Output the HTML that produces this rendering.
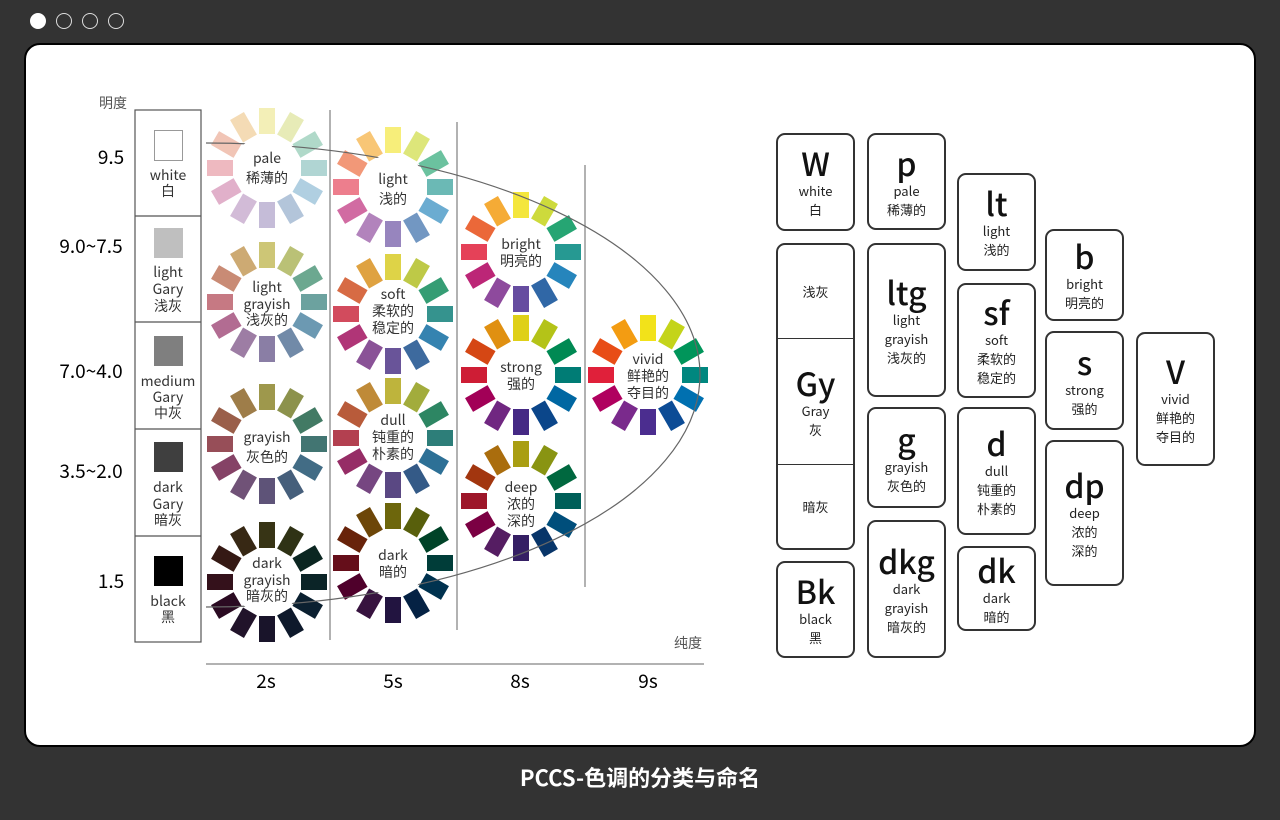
<!DOCTYPE html>
<html><head><meta charset="utf-8">
<style>
html,body{margin:0;padding:0}
body{width:1280px;height:820px;background:#333;position:relative;overflow:hidden;font-family:"Noto Sans CJK SC","Liberation Sans",sans-serif;color:#222}
.dot{position:absolute;top:13px;width:14px;height:14px;border:1.5px solid #ddd;border-radius:50%}
.card{position:absolute;left:24px;top:43px;width:1228px;height:700px;background:#fff;border:2px solid #000;border-radius:16px}
.box{position:absolute;border:2px solid #333;border-radius:9px;box-sizing:border-box;display:flex;flex-direction:column;align-items:center;justify-content:center;text-align:center;font-size:13px;line-height:19px;color:#222}
.box b{font-weight:500;font-size:32px;line-height:36px;color:#111}
.foot{position:absolute;left:0;width:1280px;top:761px;text-align:center;color:#fff;font-size:22px;font-weight:700}
</style></head><body>
<div class="dot" style="left:30px;background:#fff;border-color:#fff"></div>
<div class="dot" style="left:56px"></div>
<div class="dot" style="left:82px"></div>
<div class="dot" style="left:108px"></div>
<div class="card"></div>
<svg id="sv" width="1280" height="820" style="position:absolute;left:0;top:0" font-family="Noto Sans CJK SC, Liberation Sans, sans-serif">
<g fill="none" stroke="#999" stroke-width="1.5">
<line x1="330" y1="110" x2="330" y2="640"/>
<line x1="457" y1="122" x2="457" y2="630"/>
<line x1="585" y1="165" x2="585" y2="587"/>
<line x1="206" y1="664" x2="704" y2="664"/>
</g>
<g stroke="#555" stroke-width="1.2" fill="#fff">
<rect x="135" y="110" width="66" height="532"/>
<line x1="135" y1="216" x2="201" y2="216"/>
<line x1="135" y1="322" x2="201" y2="322"/>
<line x1="135" y1="429" x2="201" y2="429"/>
<line x1="135" y1="536" x2="201" y2="536"/>
</g>
<rect x="154.5" y="130.5" width="28" height="30" fill="#fff" stroke="#999"/>
<rect x="154" y="228" width="29" height="30" fill="#bfbfbf"/>
<rect x="154" y="336" width="29" height="30" fill="#7f7f7f"/>
<rect x="154" y="442" width="29" height="30" fill="#3f3f3f"/>
<rect x="154" y="556" width="29" height="30" fill="#000"/>
<g id="wheels"></g>
<path d="M206 143 A494 232 0 0 1 206 607" fill="none" stroke="#666" stroke-width="1.2"/>
<g id="circ"></g>
<g font-size="14" fill="#333" text-anchor="middle">
<text x="168" y="180">white</text><text x="168" y="196">白</text>
<text x="168" y="277">light</text><text x="168" y="294">Gary</text><text x="168" y="311">浅灰</text>
<text x="168" y="386">medium</text><text x="168" y="402">Gary</text><text x="168" y="418">中灰</text>
<text x="168" y="492">dark</text><text x="168" y="509">Gary</text><text x="168" y="525">暗灰</text>
<text x="168" y="606">black</text><text x="168" y="622">黑</text>
<text x="113" y="108" fill="#555">明度</text>
<text x="688" y="648" fill="#555">纯度</text>
</g>
<g font-size="19" fill="#000" text-anchor="middle">
<text x="111" y="164">9.5</text>
<text x="91" y="253">9.0~7.5</text>
<text x="91" y="378">7.0~4.0</text>
<text x="91" y="478">3.5~2.0</text>
<text x="111" y="588">1.5</text>
<text x="266" y="688">2s</text>
<text x="393" y="688">5s</text>
<text x="520" y="688">8s</text>
<text x="648" y="688">9s</text>
</g>
<g id="lbl" font-size="14" fill="#333" text-anchor="middle">
<text x="267" y="163">pale</text><text x="267" y="183">稀薄的</text>
<text x="267" y="292">light</text><text x="267" y="309">grayish</text><text x="267" y="325">浅灰的</text>
<text x="267" y="442">grayish</text><text x="267" y="462">灰色的</text>
<text x="267" y="568">dark</text><text x="267" y="585">grayish</text><text x="267" y="601">暗灰的</text>
<text x="393" y="184">light</text><text x="393" y="204">浅的</text>
<text x="393" y="299">soft</text><text x="393" y="316">柔软的</text><text x="393" y="333">稳定的</text>
<text x="393" y="425">dull</text><text x="393" y="442">钝重的</text><text x="393" y="459">朴素的</text>
<text x="393" y="560">dark</text><text x="393" y="577">暗的</text>
<text x="521" y="249">bright</text><text x="521" y="266">明亮的</text>
<text x="521" y="372">strong</text><text x="521" y="389">强的</text>
<text x="521" y="492">deep</text><text x="521" y="509">浓的</text><text x="521" y="526">深的</text>
<text x="648" y="364">vivid</text><text x="648" y="381">鲜艳的</text><text x="648" y="398">夺目的</text>
</g>
</svg>

<div class="box" style="left:776px;top:133px;width:79px;height:98px"><b>W</b>white<br>白</div>
<div class="box" style="left:776px;top:243px;width:79px;height:307px;justify-content:flex-start">
<div style="height:93px;width:100%;display:flex;align-items:center;justify-content:center;border-bottom:1.5px solid #333">浅灰</div>
<div style="height:125px;width:100%;display:flex;flex-direction:column;align-items:center;justify-content:center;border-bottom:1.5px solid #333"><b>Gy</b>Gray<br>灰</div>
<div style="flex:1;width:100%;display:flex;align-items:center;justify-content:center">暗灰</div>
</div>
<div class="box" style="left:776px;top:561px;width:79px;height:97px"><b>Bk</b>black<br>黑</div>
<div class="box" style="left:867px;top:133px;width:79px;height:97px"><b>p</b>pale<br>稀薄的</div>
<div class="box" style="left:867px;top:243px;width:79px;height:154px"><b>ltg</b>light<br>grayish<br>浅灰的</div>
<div class="box" style="left:867px;top:407px;width:79px;height:101px"><b>g</b>grayish<br>灰色的</div>
<div class="box" style="left:867px;top:520px;width:79px;height:138px"><b>dkg</b>dark<br>grayish<br>暗灰的</div>
<div class="box" style="left:957px;top:173px;width:79px;height:98px"><b>lt</b>light<br>浅的</div>
<div class="box" style="left:957px;top:283px;width:79px;height:115px"><b>sf</b>soft<br>柔软的<br>稳定的</div>
<div class="box" style="left:957px;top:407px;width:79px;height:128px"><b>d</b>dull<br>钝重的<br>朴素的</div>
<div class="box" style="left:957px;top:546px;width:79px;height:85px"><b>dk</b>dark<br>暗的</div>
<div class="box" style="left:1045px;top:229px;width:79px;height:92px"><b>b</b>bright<br>明亮的</div>
<div class="box" style="left:1045px;top:331px;width:79px;height:99px"><b>s</b>strong<br>强的</div>
<div class="box" style="left:1045px;top:440px;width:79px;height:146px"><b>dp</b>deep<br>浓的<br>深的</div>
<div class="box" style="left:1136px;top:332px;width:79px;height:134px"><b>V</b>vivid<br>鲜艳的<br>夺目的</div>
<div class="foot">PCCS-色调的分类与命名</div>
<script>
var hues=["#f2e21a","#c4d41a","#00955a","#00877f","#0070b0","#0c4c96","#4b2d8f","#7a2a8c","#b0005f","#e0203a","#e84d16","#f39c12"];
function hx(c){return [parseInt(c.substr(1,2),16),parseInt(c.substr(3,2),16),parseInt(c.substr(5,2),16)]}
function mix(c,m,t){var a=hx(c),b=hx(m);return "rgb("+a.map(function(v,i){return Math.round(v*(1-t)+b[i]*t)}).join(",")+")"}
var W=[
[267,168,"#f4f4f4",0.72],[267,302,"#b4b4b4",0.6],[267,444,"#6a6a6a",0.62],[267,582,"#0e0e14",0.82],
[393,187,"#ffffff",0.42],[393,314,"#b0b0b0",0.3],[393,438,"#707070",0.4],[393,563,"#000000",0.55],
[521,252,"#ffffff",0.15],[521,375,"#000000",0.08],[521,501,"#000000",0.3],[648,375,"#000000",0]];
var s="",c="";
W.forEach(function(w){
 for(var i=0;i<12;i++){
  s+='<rect x="'+(w[0]-8)+'" y="'+(w[1]-60)+'" width="16" height="26" fill="'+mix(hues[i],w[2],w[3])+'" transform="rotate('+(i*30)+' '+w[0]+' '+w[1]+')"/>';
 }
 c+='<circle cx="'+w[0]+'" cy="'+w[1]+'" r="33" fill="#fff"/>';
});
document.getElementById("wheels").innerHTML=s;
document.getElementById("circ").innerHTML=c;
</script>
</body></html>
